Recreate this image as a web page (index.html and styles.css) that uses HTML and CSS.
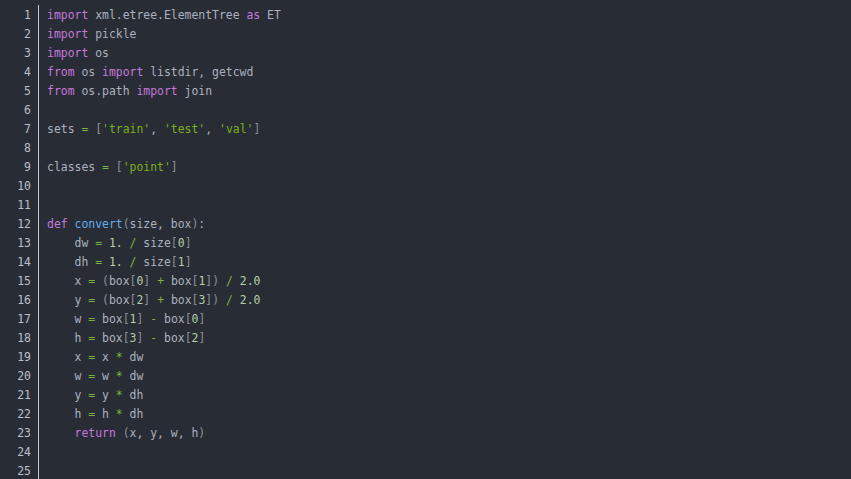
FILE: index.html
```html
<!DOCTYPE html>
<html>
<head>
<meta charset="utf-8">
<link rel="stylesheet" href="styles.css">
</head>
<body>
<div class="editor">
<div class="gutter">
<div>1</div><div>2</div><div>3</div><div>4</div><div>5</div><div>6</div><div>7</div><div>8</div><div>9</div><div>10</div><div>11</div><div>12</div><div>13</div><div>14</div><div>15</div><div>16</div><div>17</div><div>18</div><div>19</div><div>20</div><div>21</div><div>22</div><div>23</div><div>24</div><div>25</div>
</div>
<pre class="code"><span class="kw">import</span> xml.etree.ElementTree <span class="kw">as</span> ET
<span class="kw">import</span> pickle
<span class="kw">import</span> os
<span class="kw">from</span> os <span class="kw">import</span> listdir, getcwd
<span class="kw">from</span> os.path <span class="kw">import</span> join

sets <span class="op">=</span> <span class="br">[</span><span class="str">'train'</span>, <span class="str">'test'</span>, <span class="str">'val'</span><span class="br">]</span>

classes <span class="op">=</span> <span class="br">[</span><span class="str">'point'</span><span class="br">]</span>


<span class="kw">def</span> <span class="fn">convert</span><span class="br">(</span>size, box<span class="br">)</span>:
    dw <span class="op">=</span> <span class="num">1.</span> <span class="op">/</span> size<span class="br">[</span><span class="num">0</span><span class="br">]</span>
    dh <span class="op">=</span> <span class="num">1.</span> <span class="op">/</span> size<span class="br">[</span><span class="num">1</span><span class="br">]</span>
    x <span class="op">=</span> <span class="br">(</span>box<span class="br">[</span><span class="num">0</span><span class="br">]</span> <span class="op">+</span> box<span class="br">[</span><span class="num">1</span><span class="br">])</span> <span class="op">/</span> <span class="num">2.0</span>
    y <span class="op">=</span> <span class="br">(</span>box<span class="br">[</span><span class="num">2</span><span class="br">]</span> <span class="op">+</span> box<span class="br">[</span><span class="num">3</span><span class="br">])</span> <span class="op">/</span> <span class="num">2.0</span>
    w <span class="op">=</span> box<span class="br">[</span><span class="num">1</span><span class="br">]</span> <span class="op">-</span> box<span class="br">[</span><span class="num">0</span><span class="br">]</span>
    h <span class="op">=</span> box<span class="br">[</span><span class="num">3</span><span class="br">]</span> <span class="op">-</span> box<span class="br">[</span><span class="num">2</span><span class="br">]</span>
    x <span class="op">=</span> x <span class="op">*</span> dw
    w <span class="op">=</span> w <span class="op">*</span> dw
    y <span class="op">=</span> y <span class="op">*</span> dh
    h <span class="op">=</span> h <span class="op">*</span> dh
    <span class="kw">return</span> <span class="br">(</span>x, y, w, h<span class="br">)</span>

</pre>
</div>
</body>
</html>
```
FILE: styles.css
```css
html, body {
  margin: 0;
  padding: 0;
  background: #282c34;
  height: 100%;
}
.editor {
  display: flex;
  height: 479px;
  overflow: hidden;
  font-family: "DejaVu Sans Mono", monospace;
  font-size: 11.43px;
  line-height: 19px;
  color: #abb2bf;
}
.gutter {
  width: 31px;
  padding-top: 6px;
  text-align: right;
  color: #b9c0cb;
  flex: none;
}
.code {
  margin: 5px 0 0 7px;
  padding: 1px 0 0 8px;
  border-left: 1px solid #c8ccd2;
  font: inherit;
  white-space: pre;
  flex: 1;
}
.kw { color: #c678dd; }
.op { color: #7cb342; }
.br { color: #8a9199; }
.str { color: #7cae1e; }
.num { color: #b5cea8; }
.fn { color: #61afef; }
```
